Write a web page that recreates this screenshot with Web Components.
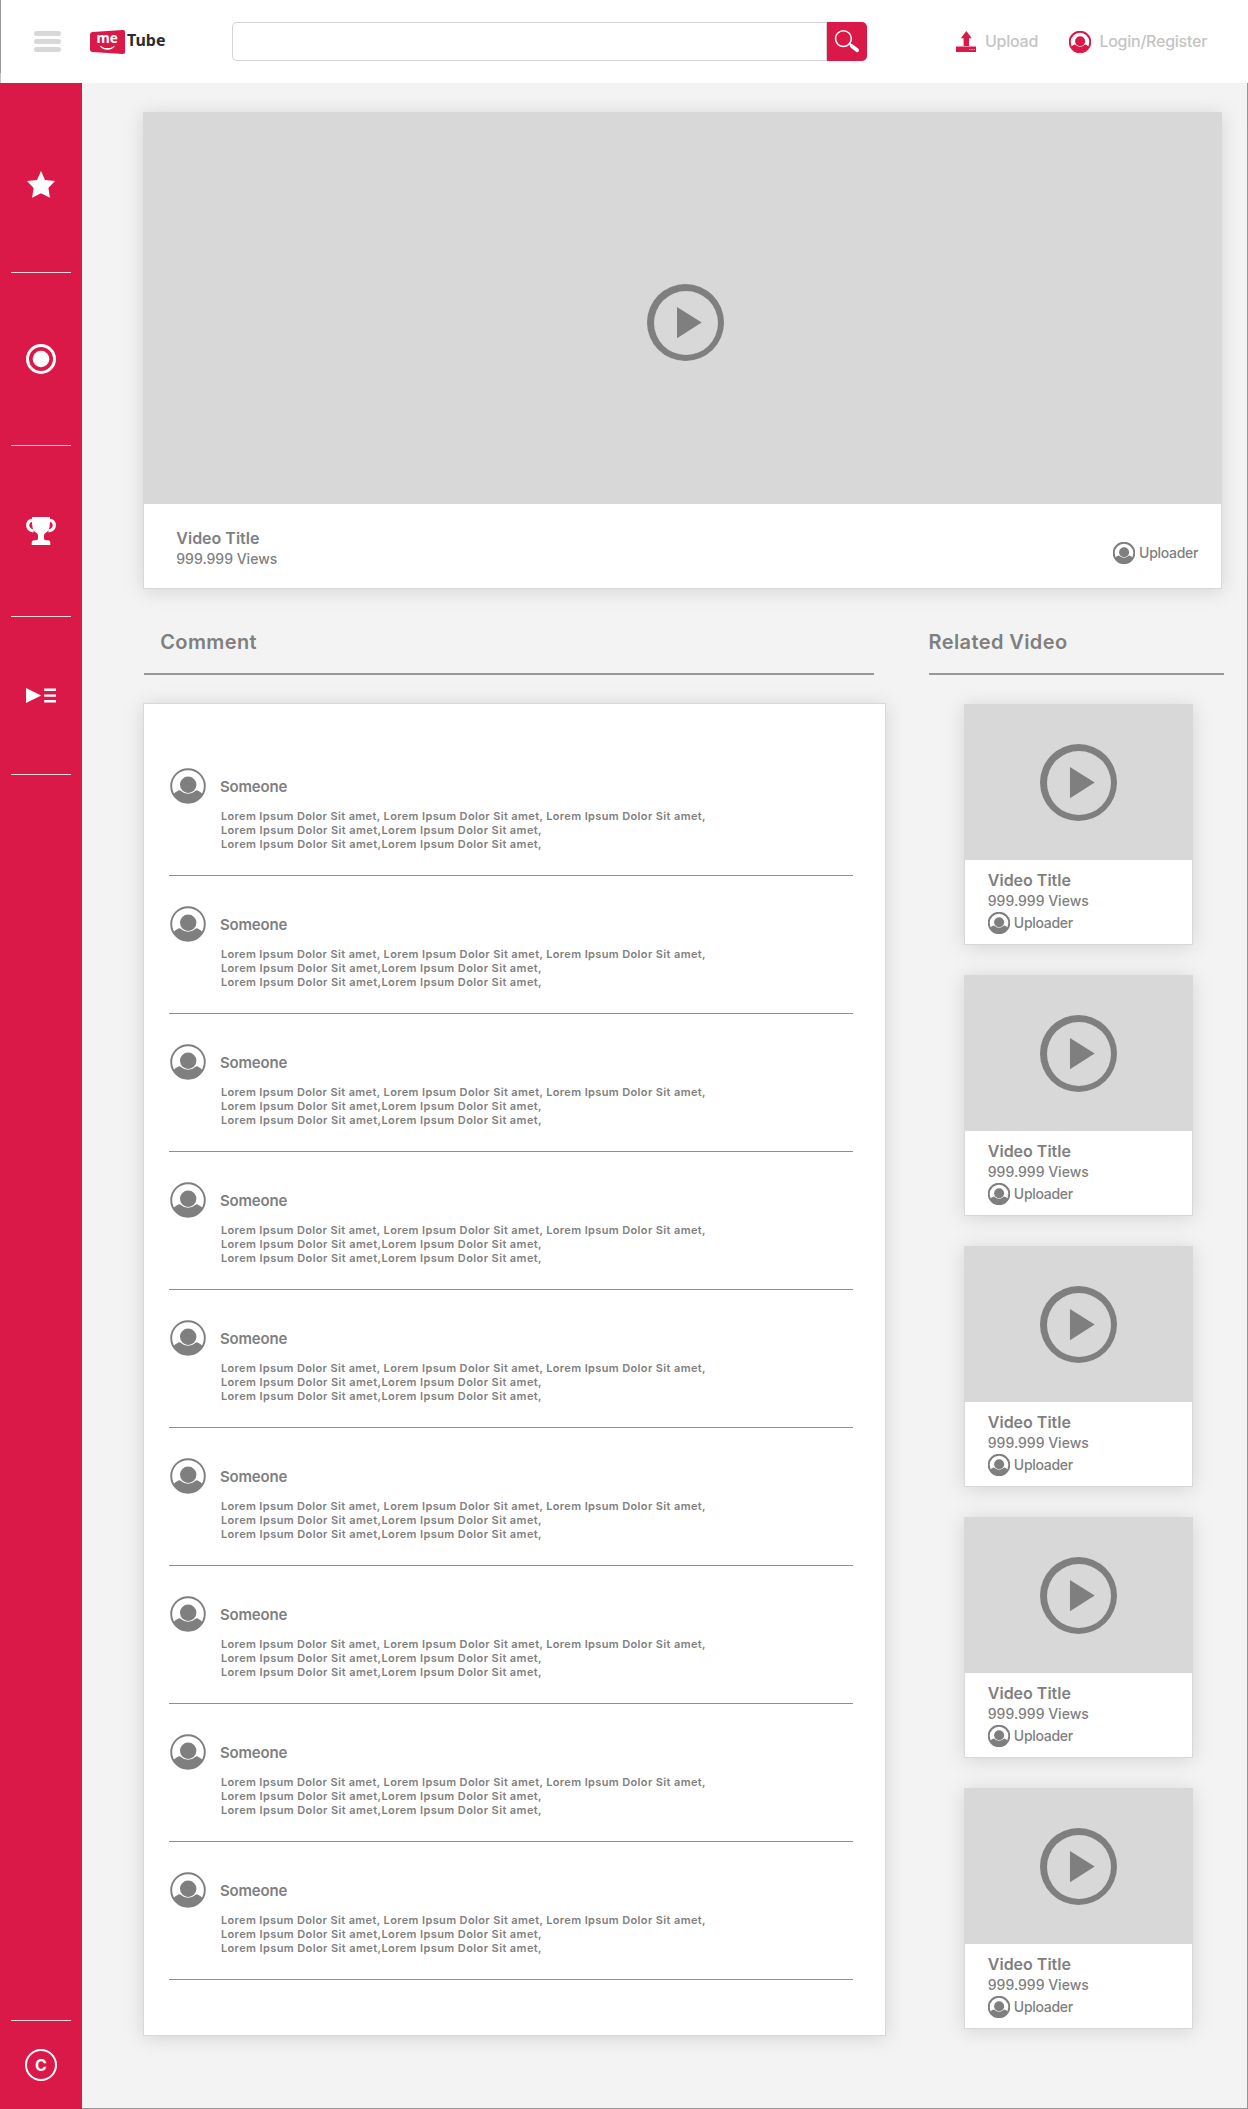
<!DOCTYPE html>
<html lang="en">
<head>
<meta charset="utf-8">
<title>meTube</title>
<style>
  html, body { margin: 0; }
  body {
    --brand: #db1949;
    --ink: #7f7f7f;
    --muted: #c4c4c4;
    --line: #d8d8d8;
    --card-shadow: 0 2px 19px rgba(0, 0, 0, .13);
    font-family: Inter, "Liberation Sans", sans-serif;
    color: var(--ink);
    background: #f3f3f3;
  }
</style>
</head>
<body>
<me-app></me-app>

<script>
const define = (name, html, setup) => {
  const tpl = document.createElement('template');
  tpl.innerHTML = html;
  customElements.define(name, class extends HTMLElement {
    constructor() {
      super();
      this.attachShadow({ mode: 'open' }).append(tpl.content.cloneNode(true));
    }
    connectedCallback() { if (setup) setup(this, this.shadowRoot); }
  });
};

/* Round avatar; --ring sets the outline width on a 36 unit grid */
define('me-avatar', `
<style>
  :host { display: block; flex: none; width: 22px; height: 22px; }
  svg { display: block; width: 100%; height: 100%; }
  .ring { stroke-width: var(--ring, 3.2px); }
</style>
<svg viewBox="0 0 36 36" fill="currentColor">
  <circle class="ring" cx="18" cy="18" r="16.8" fill="none" stroke="currentColor"/>
  <circle cx="18.2" cy="16.7" r="8.2"/>
  <path d="M3.2 26.3Q5.5 23.5 9 22.2Q10.2 22 11 23A10.4 10.4 0 0 0 25.2 23Q26 22 27.2 22.2Q30.5 23.5 32.8 26.3A17 17 0 0 1 3.2 26.3Z"/>
</svg>`);

define('me-play', `
<style>
  :host { display: block; width: 77px; height: 77px; }
  svg { display: block; }
</style>
<svg width="77" height="77" viewBox="0 0 77 77" fill="#7f7f7f">
  <path fill-rule="evenodd" d="M38.5 0a38.5 38.5 0 1 0 0 77a38.5 38.5 0 1 0 0-77zM39 7a32 32 0 1 1 0 64a32 32 0 1 1 0-64z"/>
  <path d="M30 23L54.7 38.6L30 54.3z"/>
</svg>`);

define('me-logo', `
<style>:host { display: block; } svg { display: block; }</style>
<svg width="80" height="30" viewBox="0 0 80 30">
  <path d="M2.4 5L33 3Q35 2.9 35 5V25Q35 27.1 33 27L2.2 25Q0 24.8 0 22.6V7.2Q0 5.2 2.4 5Z" fill="#db1949"/>
  <text x="6.4" y="16.4" font-family="Noto Sans, Open Sans, sans-serif" font-weight="700" font-size="13.6" fill="#fff">me</text>
  <path d="M9.6 18.4Q17.5 23.8 25.2 18.4Q22.5 22.8 17.4 22.8Q12 22.8 9.6 18.4Z" fill="#fff"/>
  <text x="37" y="18.6" font-family="Noto Sans, Open Sans, sans-serif" font-weight="700" font-size="16" fill="#2d2d2d">Tube</text>
</svg>`);

define('me-search', `
<style>
  :host { display: flex; width: 635px; height: 39px; }
  .field { flex: 1; box-sizing: border-box; border: 1px solid #d3d3d3; border-right: 0; border-radius: 5px 0 0 5px; background: #fff; }
  .go { width: 40px; background: var(--brand); border-radius: 0 5px 5px 0; box-shadow: -1px 0 #d3d3d3; }
  svg { display: block; }
</style>
<div class="field"></div>
<div class="go"><svg width="40" height="39" viewBox="0 0 40 39" fill="none" stroke="#fff" stroke-linecap="round">
  <circle cx="16.4" cy="16.6" r="7.9" stroke-width="1.5"/>
  <path d="M22.6 21.8L24.6 23.6" stroke-width="2.2"/>
  <path d="M25 24.2L30.2 28.2" stroke-width="3.8"/>
</svg></div>`);

define('me-header', `
<style>
  :host { display: flex; align-items: flex-start; box-sizing: border-box; height: 83px;
          background: linear-gradient(#979797 73px, #c4c4c4 73px) 0 0 / 1px 100% no-repeat #fff; }
  .menu { display: flex; flex-direction: column; gap: 3px; margin: 31px 0 0 34px; }
  .menu i { width: 27px; height: 5px; border-radius: 2.5px; background: #d8d8d8; }
  me-logo { margin: 27px 0 0 29px; }
  me-search { margin: 22px 0 0 62px; }
  .link { display: flex; align-items: flex-start; font: 500 16px/20px Inter, sans-serif; letter-spacing: -.25px; color: var(--muted); }
  .link span { margin-top: 31px; white-space: nowrap; }
  .up { width: 82px; margin-left: 89px; }
  .up svg { display: block; flex: none; margin: 31px 9px 0 0; }
  .login { margin-left: 31px; }
  .login me-avatar { margin: 31px 8.4px 0 0; color: var(--brand); }
</style>
<div class="menu"><i></i><i></i><i></i></div>
<me-logo></me-logo>
<me-search></me-search>
<div class="link up">
  <svg width="20" height="21" viewBox="0 0 20 21" fill="#db1949">
    <path d="M10.3 0L15.8 7.2H13V15H7.6V7.2H4.9Z"/>
    <path d="M0 15h20v1H0z" opacity=".5"/>
    <path d="M0 16h20v5H0z"/>
    <path d="M13 18h1.4v1H13zM15.3 18h1.4v1h-1.4zM17.6 18H19v1h-1.4z" fill="#fff" opacity=".65"/>
  </svg>
  <span>Upload</span>
</div>
<div class="link login"><me-avatar></me-avatar><span>Login/Register</span></div>`);

define('me-nav-item', `
<style>
  :host { display: flex; justify-content: center; align-items: flex-start; box-sizing: border-box;
          margin: 0 11px; padding-top: 71px; border-bottom: 1px solid #e2d5d9; }
  ::slotted(svg) { display: block; }
</style>
<slot></slot>`);

define('me-sidebar', `
<style>
  :host { display: flex; flex-direction: column; width: 82px; flex: none; background: var(--brand); color: #fff; }
  .a { height: 190px; padding-top: 88px; } .b { height: 173px; } .c { height: 171px; } .d { height: 158px; }
  footer { display: flex; justify-content: center; box-sizing: border-box; height: 89px; margin: auto 11px 0; padding-top: 28px; border-top: 1px solid #e2d5d9; }
  .copy { display: flex; align-items: center; justify-content: center; box-sizing: border-box; width: 32px; height: 32px;
          border: 2px solid #fff; border-radius: 50%; font: 700 16px/20px Inter, sans-serif; }
</style>
<me-nav-item class="a"><svg width="28" height="27" viewBox="0 0 28 27" fill="#fff"><path d="M14 0L18 9L28 10.1L21.4 17L22.9 26.8L14 22.2L5.1 26.8L6.6 17L0 10.1L10 9Z"/></svg></me-nav-item>
<me-nav-item class="b"><svg width="30" height="30" viewBox="0 0 30 30" fill="#fff"><circle cx="15" cy="15" r="13.5" fill="none" stroke="#fff" stroke-width="3"/><circle cx="15" cy="15" r="8.3"/></svg></me-nav-item>
<me-nav-item class="c"><svg width="30" height="28" viewBox="0 0 30 28" fill="#fff">
  <path d="M6 0H24V3Q24 10.5 22.6 13Q21.7 14.5 19.8 15.8Q18 17 18 18V21.5Q18 23 20 23.3H22.5Q24.3 23.6 24.3 25.5V28H5.7V25.5Q5.7 23.6 7.5 23.3H10Q12 23 12 21.5V18Q12 17 10.2 15.8Q8.3 14.5 7.4 13Q6 10.5 6 3Z"/>
  <path d="M6.6 3.4Q1.7 3.2 1.7 8.6Q2 13.2 7.6 13.9M23.4 3.4Q28.3 3.2 28.3 8.6Q28 13.2 22.4 13.9" fill="none" stroke="#fff" stroke-width="3.2"/></svg></me-nav-item>
<me-nav-item class="d"><svg width="30" height="15" viewBox="0 0 30 15" fill="#fff"><path d="M0 0L15.2 7.5L0 15Z"/><path d="M18.2 .6H30V3H18.2ZM18.2 6.4H30V8.8H18.2ZM18.2 12H30V14.4H18.2Z"/></svg></me-nav-item>
<footer><div class="copy">C</div></footer>`);

/* Video card: stacked by default, "wide" puts the uploader on the right */
define('me-video', `
<style>
  :host { display: block; box-sizing: border-box; width: 229px; height: 241px; background: #fff;
          border: 1px solid var(--line); box-shadow: var(--card-shadow); }
  .pic { display: flex; justify-content: center; height: 155px; background: var(--line); }
  .pic me-play { margin-top: 39px; }
  .info { padding: 10px 0 0 22.8px; }
  .title { font: 600 16px/20px Inter, sans-serif; }
  .views { font: 500 14px/17px Inter, sans-serif; margin-top: 2px; }
  .by { display: flex; align-items: flex-start; gap: 4px; margin-top: 3px; font: 500 14px/17px Inter, sans-serif; letter-spacing: -.28px; }
  .by span { margin-top: 2px; }
  :host([wide]) { width: 1079px; height: 477px; }
  :host([wide]) .pic { height: 391px; }
  :host([wide]) .pic me-play { margin: 171px 0 0 6px; }
  :host([wide]) .info { display: flex; justify-content: space-between; padding: 24px 22.8px 0 32.3px; }
  :host([wide]) .by { margin-top: 14px; }
</style>
<div class="pic"><me-play></me-play></div>
<div class="info">
  <div><div class="title"><slot name="title"></slot></div><div class="views"><slot name="views"></slot></div></div>
  <div class="by"><me-avatar></me-avatar><span><slot name="uploader"></slot></span></div>
</div>`);

define('me-heading', `
<style>
  :host { display: block; box-sizing: border-box; height: 45px; border-bottom: 2px solid #979797; white-space: nowrap;
          font: 600 20px/24px Inter, sans-serif; letter-spacing: .4px; }
</style>
<slot></slot>`);

define('me-comment', `
<style>
  :host { display: block; box-sizing: border-box; height: 138px; padding-top: 30px; border-bottom: 1px solid #8f8f8f; }
  .who { display: flex; align-items: flex-start; padding-left: 1px; font: 600 15px/19px Inter, sans-serif; letter-spacing: -.2px; }
  me-avatar { width: 36px; height: 36px; --ring: 1.9px; }
  .who span { margin: 9px 0 0 14px; }
  .text { margin: 5px 0 0 51.9px; font: 600 11px/14px Inter, sans-serif; letter-spacing: .37px; white-space: nowrap; }
  ::slotted(.tight) { letter-spacing: .4px; }
</style>
<div class="who"><me-avatar></me-avatar><span><slot name="author"></slot></span></div>
<div class="text"><slot></slot></div>`);

define('me-comments', `
<style>
  :host { display: block; box-sizing: border-box; width: 743px; height: 1333px; padding: 34px 32px 0 25px;
          background: #fff; border: 1px solid var(--line); box-shadow: var(--card-shadow); }
</style>
<slot></slot>`, host => {
  if (host.children.length) return;
  const phrase = 'Lorem Ipsum Dolor Sit amet,';
  for (let i = 0; i < 9; i++) {
    const c = document.createElement('me-comment');
    c.innerHTML = `<span slot="author">Someone</span><div>${phrase} ${phrase} ${phrase}</div><div class="tight">${phrase}${phrase}</div><div class="tight">${phrase}${phrase}</div>`;
    host.append(c);
  }
});

define('me-related', `
<style>
  :host { display: flex; flex-direction: column; gap: 30px; margin-left: 36px; }
</style>`, (host, root) => {
  if (root.querySelector('me-video')) return;
  for (let i = 0; i < 5; i++) {
    const v = document.createElement('me-video');
    v.innerHTML = '<span slot="title">Video Title</span><span slot="views">999.999 Views</span><span slot="uploader">Uploader</span>';
    root.append(v);
  }
});

define('me-app', `
<style>
  :host { display: flex; flex-direction: column; width: 1248px; height: 2109px; }
  .body { display: flex; flex: 1; }
  main { flex: 1; padding: 29px 0 0 61px; box-shadow: inset -1px -1px #979797; }
  .cols { display: flex; gap: 42px; margin-top: 41px; }
  .left me-heading { width: 729.5px; margin-left: 1px; padding-left: 16.2px; }
  .right me-heading { width: 295px; margin-left: .5px; }
  me-comments { margin-top: 28px; }
  me-related { margin-top: 29px; }
</style>
<me-header></me-header>
<div class="body">
  <me-sidebar></me-sidebar>
  <main>
    <me-video wide><span slot="title">Video Title</span><span slot="views">999.999 Views</span><span slot="uploader">Uploader</span></me-video>
    <div class="cols">
      <section class="left"><me-heading>Comment</me-heading><me-comments></me-comments></section>
      <section class="right"><me-heading>Related Video</me-heading><me-related></me-related></section>
    </div>
  </main>
</div>`);
</script>
</body>
</html>
